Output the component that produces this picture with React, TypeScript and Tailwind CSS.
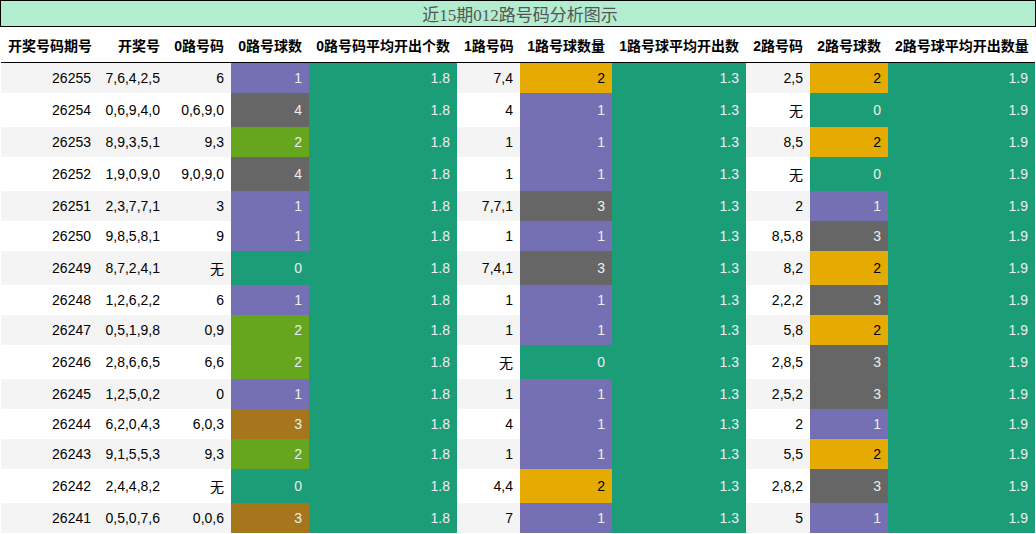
import React from 'react';

type Row = [string, string, string, number, string, number, string, number];

const rows: Row[] = [
  ['26255', '7,6,4,2,5', '6', 1, '7,4', 2, '2,5', 2],
  ['26254', '0,6,9,4,0', '0,6,9,0', 4, '4', 1, '无', 0],
  ['26253', '8,9,3,5,1', '9,3', 2, '1', 1, '8,5', 2],
  ['26252', '1,9,0,9,0', '9,0,9,0', 4, '1', 1, '无', 0],
  ['26251', '2,3,7,7,1', '3', 1, '7,7,1', 3, '2', 1],
  ['26250', '9,8,5,8,1', '9', 1, '1', 1, '8,5,8', 3],
  ['26249', '8,7,2,4,1', '无', 0, '7,4,1', 3, '8,2', 2],
  ['26248', '1,2,6,2,2', '6', 1, '1', 1, '2,2,2', 3],
  ['26247', '0,5,1,9,8', '0,9', 2, '1', 1, '5,8', 2],
  ['26246', '2,8,6,6,5', '6,6', 2, '无', 0, '2,8,5', 3],
  ['26245', '1,2,5,0,2', '0', 1, '1', 1, '2,5,2', 3],
  ['26244', '6,2,0,4,3', '6,0,3', 3, '4', 1, '2', 1],
  ['26243', '9,1,5,5,3', '9,3', 2, '1', 1, '5,5', 2],
  ['26242', '2,4,4,8,2', '无', 0, '4,4', 2, '2,8,2', 3],
  ['26241', '0,5,0,7,6', '0,0,6', 3, '7', 1, '5', 1],
];

// colour of a ball-count cell, per column
const zeroColors: Record<number, string> = {
  0: 'bg-[#1b9e77] text-[#eeeeee]',
  1: 'bg-[#7570b3] text-[#eeeeee]',
  2: 'bg-[#66a61e] text-[#eeeeee]',
  3: 'bg-[#a6761d] text-[#eeeeee]',
  4: 'bg-[#666666] text-[#eeeeee]',
};
const otherColors: Record<number, string> = {
  0: 'bg-[#1b9e77] text-[#eeeeee]',
  1: 'bg-[#7570b3] text-[#eeeeee]',
  2: 'bg-[#e6ab02] text-black',
  3: 'bg-[#666666] text-[#eeeeee]',
};

const headers = [
  '开奖号码期号',
  '开奖号',
  '0路号码',
  '0路号球数',
  '0路号码平均开出个数',
  '1路号码',
  '1路号球数量',
  '1路号球平均开出数',
  '2路号码',
  '2路号球数',
  '2路号球平均开出数量',
];

const widths = [97, 69, 64, 78, 148, 63, 92, 134, 64, 78, 147];

const cell = 'px-[7px] py-[7px] text-right whitespace-nowrap';
const avg = 'bg-[#1b9e77] text-[#eeeeee]';

export default function App() {
  return (
    <div className="w-[1036px] h-[534px] overflow-hidden bg-white text-[14px] leading-[normal] text-black" style={{ fontFamily: '"Liberation Sans", "Noto Sans CJK SC", sans-serif' }}>
      <div
        className="h-[27px] border border-black bg-[#b3edd0] flex items-start justify-center pt-0 pl-[4px] text-[17px] text-[#555555] leading-[normal]"
        style={{ fontFamily: '"Liberation Serif", "Noto Sans CJK SC", serif' }}
      >
        近15期012路号码分析图示
      </div>
      <div className="px-[1px]">
        <table className="table-fixed border-collapse w-[1034px]">
          <colgroup>
            {widths.map((w, i) => (
              <col key={i} style={{ width: w }} />
            ))}
          </colgroup>
          <thead>
            <tr className="border-b border-black">
              {headers.map((h) => (
                <th key={h} className="px-[7px] pt-[8px] pb-[7px] text-right whitespace-nowrap font-bold">
                  {h}
                </th>
              ))}
            </tr>
          </thead>
          <tbody>
            {rows.map((r, i) => {
              const stripe = i % 2 === 0 ? 'bg-[#f4f4f4]' : 'bg-white';
              return (
                <tr key={r[0]} className={stripe}>
                  <td className={cell}>{r[0]}</td>
                  <td className={cell}>{r[1]}</td>
                  <td className={cell}>{r[2]}</td>
                  <td className={`${cell} ${zeroColors[r[3]]}`}>{r[3]}</td>
                  <td className={`${cell} ${avg}`}>1.8</td>
                  <td className={cell}>{r[4]}</td>
                  <td className={`${cell} ${otherColors[r[5]]}`}>{r[5]}</td>
                  <td className={`${cell} ${avg}`}>1.3</td>
                  <td className={cell}>{r[6]}</td>
                  <td className={`${cell} ${otherColors[r[7]]}`}>{r[7]}</td>
                  <td className={`${cell} ${avg}`}>1.9</td>
                </tr>
              );
            })}
          </tbody>
        </table>
      </div>
    </div>
  );
}
